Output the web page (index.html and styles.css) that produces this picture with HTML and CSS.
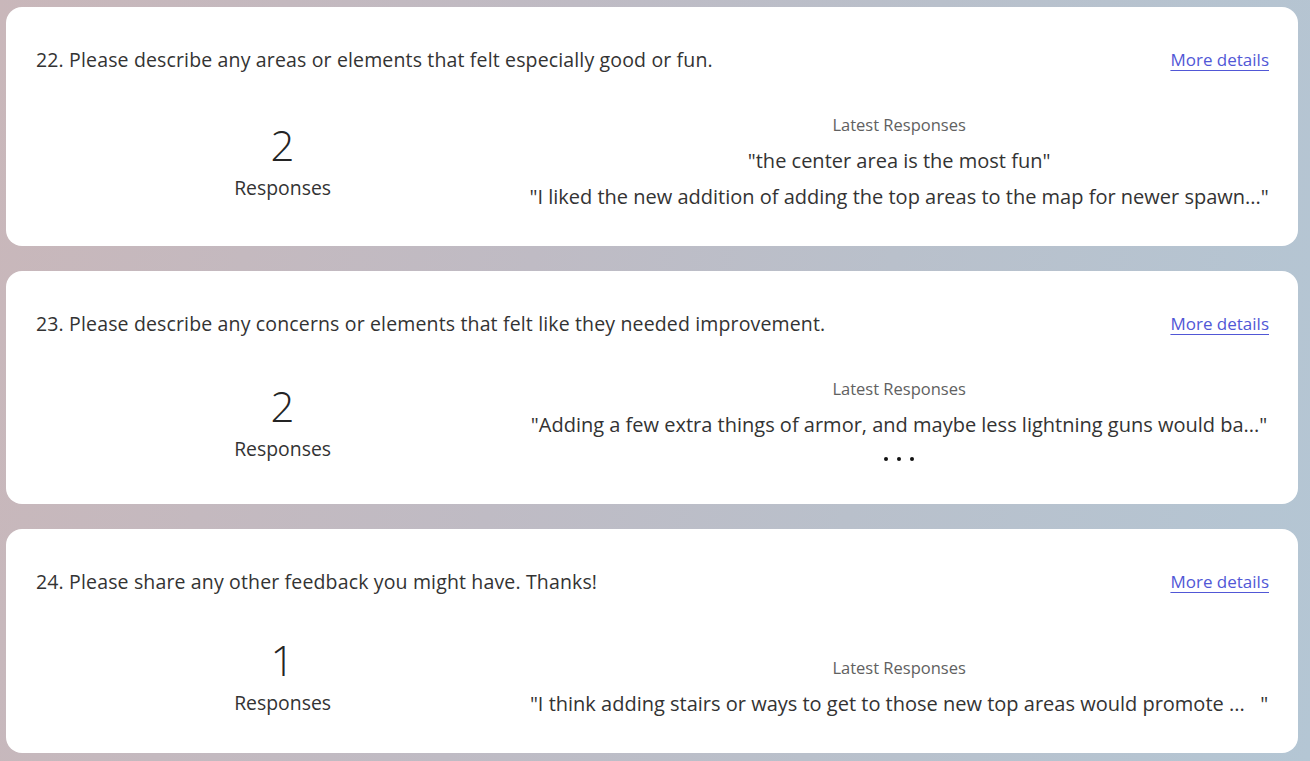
FILE: index.html
```html
<!DOCTYPE html>
<html lang="en">
<head>
<meta charset="utf-8">
<title>Responses</title>
<link rel="stylesheet" href="styles.css">
</head>
<body>
<main class="list">
  <section class="card">
    <header class="card-head">
      <h2 class="question">22. Please describe any areas or elements that felt especially good or fun.</h2>
      <a class="details" href="#">More details</a>
    </header>
    <div class="card-body">
      <div class="count">
        <div class="count-num">2</div>
        <div class="count-label">Responses</div>
      </div>
      <div class="latest">
        <div class="latest-title">Latest Responses</div>
        <div class="quote">"the center area is the most fun"</div>
        <div class="quote">"I liked the new addition of adding the top areas to the map for newer spawn..."</div>
      </div>
    </div>
  </section>

  <section class="card">
    <header class="card-head">
      <h2 class="question">23. Please describe any concerns or elements that felt like they needed improvement.</h2>
      <a class="details" href="#">More details</a>
    </header>
    <div class="card-body">
      <div class="count">
        <div class="count-num">2</div>
        <div class="count-label">Responses</div>
      </div>
      <div class="latest">
        <div class="latest-title">Latest Responses</div>
        <div class="quote">"Adding a few extra things of armor, and maybe less lightning guns would ba..."</div>
        <div class="more-dots"><span></span><span></span><span></span></div>
      </div>
    </div>
  </section>

  <section class="card">
    <header class="card-head">
      <h2 class="question">24. Please share any other feedback you might have. Thanks!</h2>
      <a class="details" href="#">More details</a>
    </header>
    <div class="card-body">
      <div class="count">
        <div class="count-num">1</div>
        <div class="count-label">Responses</div>
      </div>
      <div class="latest">
        <div class="latest-title">Latest Responses</div>
        <div class="quote">"I think adding stairs or ways to get to those new top areas would promote ...   "</div>
      </div>
    </div>
  </section>
</main>
</body>
</html>
```

FILE: styles.css
```css
html, body {
  margin: 0;
  padding: 0;
}

body {
  min-height: 761px;
  background: linear-gradient(100deg, #c9b7ba 0%, #bfbbc4 40%, #b9c0cb 65%, #b4c6d4 100%);
  font-family: "Open Sans", "Noto Sans", "Liberation Sans", sans-serif;
  color: #242424;
}

.list {
  display: flex;
  flex-direction: column;
  gap: 25px;
  padding: 7px 12px 8px 6px;
}

.card {
  background: #ffffff;
  border-radius: 16px;
  padding: 30px 29px 31px 30px;
}

.card-head {
  display: flex;
  align-items: center;
  justify-content: space-between;
  height: 45px;
}

.question {
  margin: 0;
  font-size: 19.5px;
  font-weight: 400;
  color: #333333;
  letter-spacing: 0.15px;
}

.details {
  font-size: 17px;
  color: #5157d6;
  text-decoration: underline;
  text-underline-offset: 4px;
  text-decoration-thickness: 1px;
}

.card-body {
  display: flex;
  margin-top: 32px;
  min-height: 86px;
}

.count {
  flex: 0 0 40%;
  display: flex;
  flex-direction: column;
  align-items: center;
  align-self: center;
  margin-bottom: 3px;
}

.count-num {
  font-size: 42px;
  line-height: 42px;
  font-weight: 300;
  color: #242424;
}

.count-label {
  margin-top: 8px;
  font-size: 19.4px;
  line-height: 28px;
  color: #333333;
}

.latest {
  flex: 1 1 auto;
  display: flex;
  flex-direction: column;
  align-items: center;
  align-self: flex-end;
}

.latest-title {
  font-size: 16.5px;
  line-height: 22px;
  color: #616161;
  margin-bottom: 7px;
}

.quote {
  font-size: 20px;
  line-height: 36px;
  color: #333333;
  white-space: pre;
}

.more-dots {
  display: flex;
  gap: 9px;
  height: 30px;
  align-items: center;
  padding-top: 2px;
  box-sizing: border-box;
}

.more-dots span {
  width: 4px;
  height: 4px;
  border-radius: 50%;
  background: #111111;
}
```
